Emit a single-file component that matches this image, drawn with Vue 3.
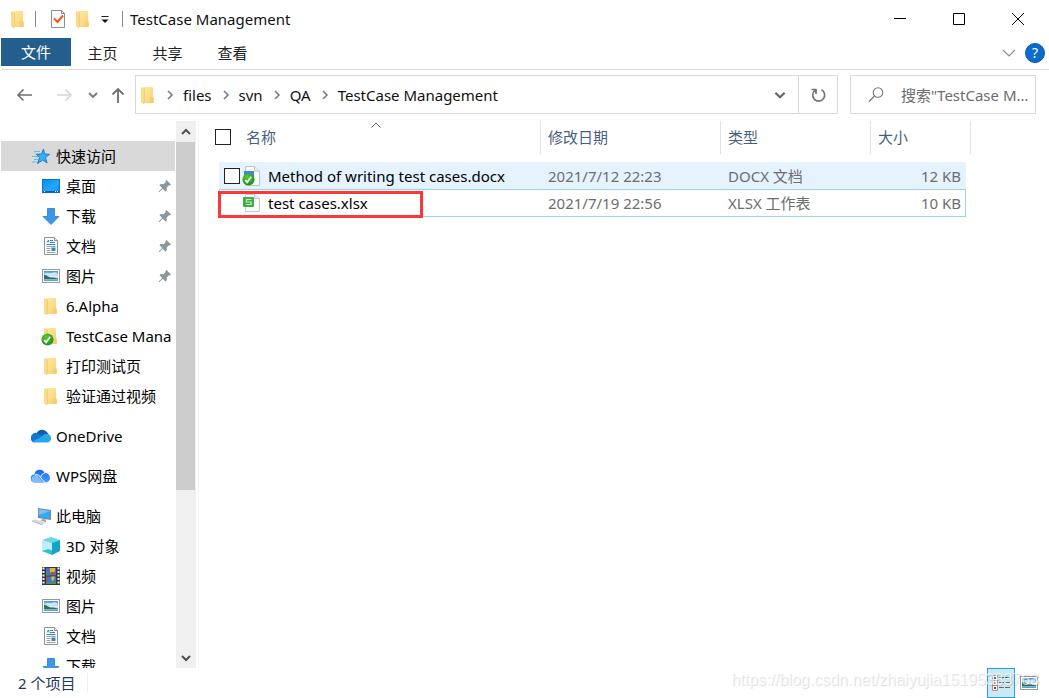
<script setup>
import { ref } from 'vue'

const tabs = ['主页', '共享', '查看']
const crumbs = ['files', 'svn', 'QA', 'TestCase Management']

const groups = [
  {
    label: '快速访问', icon: 'star', selected: true,
    items: [
      { label: '桌面', icon: 'desktop', pinned: true },
      { label: '下载', icon: 'download', pinned: true },
      { label: '文档', icon: 'document', pinned: true },
      { label: '图片', icon: 'picture', pinned: true },
      { label: '6.Alpha', icon: 'folder' },
      { label: 'TestCase Mana', icon: 'synced' },
      { label: '打印测试页', icon: 'folder' },
      { label: '验证通过视频', icon: 'folder' },
    ],
  },
  { label: 'OneDrive', icon: 'onedrive', items: [] },
  { label: 'WPS网盘', icon: 'wps', items: [] },
  {
    label: '此电脑', icon: 'pc',
    items: [
      { label: '3D 对象', icon: 'cube' },
      { label: '视频', icon: 'video' },
      { label: '图片', icon: 'picture' },
      { label: '文档', icon: 'document' },
      { label: '下载', icon: 'download' },
    ],
  },
]

const files = [
  { name: 'Method of writing test cases.docx', icon: 'docx', date: '2021/7/12 22:23', type: 'DOCX 文档', size: '12 KB', state: 'hover' },
  { name: 'test cases.xlsx', icon: 'xlsx', date: '2021/7/19 22:56', type: 'XLSX 工作表', size: '10 KB', state: 'focused', marked: true },
]

const search = ref('')
const allChecked = ref(false)
const rowChecked = ref(false)
</script>

<template>
  <div class="window">
    <svg class="defs" aria-hidden="true">
      <defs>
        <linearGradient id="gFolder" x1="0" x2="1" y1="0" y2="1">
          <stop offset="0" stop-color="#ffe9a6" /><stop offset="1" stop-color="#f7d070" />
        </linearGradient>
        <linearGradient id="gScreen" x1="0" x2="1" y1="0" y2="1">
          <stop offset="0" stop-color="#0a8cf0" /><stop offset="0.6" stop-color="#22a7ff" /><stop offset="1" stop-color="#1590f0" />
        </linearGradient>
        <linearGradient id="gSky" x1="0" x2="0" y1="0" y2="1">
          <stop offset="0" stop-color="#3f8fd8" /><stop offset="0.55" stop-color="#dff1fb" /><stop offset="1" stop-color="#4a9ac4" />
        </linearGradient>
        <radialGradient id="gOk" cx="0.4" cy="0.3" r="0.8">
          <stop offset="0" stop-color="#5cc832" /><stop offset="1" stop-color="#148a14" />
        </radialGradient>
        <linearGradient id="gWps" x1="0" x2="0" y1="0" y2="1">
          <stop offset="0" stop-color="#1464f0" /><stop offset="1" stop-color="#4aa0ff" />
        </linearGradient>
      </defs>
      <symbol id="folder" viewBox="0 0 20 20">
        <path d="M5 2h9.500l.5.500V12l1 1v4.500l-.5.500H5z" fill="url(#gFolder)" />
        <path d="M12 13.500l1.500-1.500H15v6h-3z" fill="#f3c862" opacity=".5" />
        <path d="M3 2l3.500 1.500V17L5.500 19 3 17.500z" fill="#f9dc86" />
        <path d="M6.500 3.500V17L5.500 19" fill="none" stroke="#e8c469" stroke-width=".6" />
      </symbol>
      <symbol id="ok" viewBox="0 0 14 14">
        <circle cx="7" cy="7" r="6.500" fill="url(#gOk)" />
        <path d="M3.500 7.500l2 2.500L10 4" fill="none" stroke="#fff" stroke-width="1.800" />
      </symbol>
      <symbol id="synced" viewBox="0 0 20 20">
        <use href="#folder" width="20" height="20" />
        <use href="#ok" x="0" y="7" width="13" height="13" />
      </symbol>
      <symbol id="star" viewBox="0 0 20 20">
        <path d="M3 5.500h6M4 8h5M1 10.500h6M3 13.500h4M1 16h5" stroke="#70b8ea" stroke-width="1" />
        <path d="M12.500 3l1 5 5 .3-4 3.200 1.600 5.500-4.500-3-5 3.500 2-6L5.500 8.500l5-.5z" fill="#34b0fa" stroke="#1a7cc8" stroke-width="1" />
      </symbol>
      <symbol id="desktop" viewBox="0 0 20 20">
        <rect x="1.500" y="3.500" width="17" height="13" fill="url(#gScreen)" stroke="#0b72c8" />
        <path d="M2 15h16v1.500H2z" fill="#0a5ea8" />
        <path d="M3 15.500h1M14 15.500h1M16 15.500h1" stroke="#fff" />
      </symbol>
      <symbol id="download" viewBox="0 0 20 20">
        <path d="M6.500 2.500h7v8h4.500L10 18.500 2 10.500h4.500z" fill="#3b97e8" stroke="#2a7ccb" stroke-width=".8" />
      </symbol>
      <symbol id="document" viewBox="0 0 20 20">
        <path d="M3.500 1.500h10l3 3v14h-13z" fill="#fff" stroke="#8b9297" />
        <path d="M13.500 1.500v3h3" fill="#e6e9eb" stroke="#8b9297" />
        <path d="M6 6.500L7.500 4 8 6.500M9 4.500h3M9 6.500h5M5.500 8.500h9" fill="none" stroke="#2c86d0" />
        <path d="M5.500 10.500h9M5.500 12.500h4M5.500 14.500h4M5.500 16.500h9" stroke="#9aa3aa" />
        <rect x="10.500" y="11.500" width="4" height="3.500" fill="#3d84c0" />
      </symbol>
      <symbol id="picture" viewBox="0 0 20 20">
        <rect x="1.500" y="3.500" width="17" height="13" fill="#fff" stroke="#93999e" />
        <rect x="3" y="5" width="14" height="10" fill="url(#gSky)" />
        <path d="M3 9c3 0 4 2 7 2.500 3 0 5 .5 7 1V13H3z" fill="#33705c" />
        <path d="M4 7.500c3-1.500 5 .5 7-.5s3-1 5 0v1.500c-4 .5-8 .5-12 0z" fill="#fff" opacity=".65" />
      </symbol>
      <symbol id="onedrive" viewBox="0 0 22 20">
        <path d="M6.500 8a6 6 0 0 1 10.800-1.500L19 9l-8 4z" fill="#0f5cb4" />
        <path d="M1 12.500A4.800 4.800 0 0 1 8 7.500l6 3.500-10 5.500A4 4 0 0 1 1 12.500z" fill="#0f78d4" />
        <path d="M12 10.500a5 5 0 0 1 4.500-2.700A4.500 4.500 0 0 1 21 12.300a4 4 0 0 1-4 4.200H5c-1 0-2-.5-2.500-1z" fill="#2aa6ee" />
      </symbol>
      <symbol id="wps" viewBox="0 0 22 20">
        <path d="M4.500 8.500a5.200 5.200 0 0 1 10-1.500 5 5 0 0 1 5.500 5 4.300 4.300 0 0 1-4.500 4.500H5a4 4 0 0 1-.5-8z" fill="url(#gWps)" />
        <path d="M1.500 13a4 4 0 0 1 7-2.500l5 6H5A3.500 3.500 0 0 1 1.500 13z" fill="#7fbcff" />
        <path d="M5 8.800c3-.8 4.500 1 6 3s2.500 4 4.500 4.600M10.500 11.300c1-2.500 2.500-3.800 4.300-4.200" fill="none" stroke="#fff" stroke-width="1" />
      </symbol>
      <symbol id="pc" viewBox="0 0 22 20">
        <path d="M8 2l13 2v10L8 12z" fill="#7c878f" />
        <path d="M9 3.200l11 1.700v7.900L9 11z" fill="#35a8f4" />
        <path d="M9 3.200l11 1.700L9 9z" fill="#72c6fa" />
        <path d="M12 13l4 .5v2.500l-5-1z" fill="#9ba5ac" />
        <path d="M2 14.500l4-1 10 3.500-3.500 1.500z" fill="#d3d9de" />
        <path d="M2 14.500v1L12.500 19.500V18.500z" fill="#a9b2b9" />
      </symbol>
      <symbol id="cube" viewBox="0 0 20 20">
        <path d="M10 1l9 3-8 3.500L1 4z" fill="#6bd6e8" />
        <path d="M1 4l10 3.500V19l-10-4z" fill="#bfeef4" />
        <path d="M11 7l8-3v11l-8 4z" fill="#12a4c4" />
        <path d="M1 15l6-2 4 1.500V19z" fill="#33bcd2" />
      </symbol>
      <symbol id="video" viewBox="0 0 20 20">
        <path d="M1 1h18v18H1z" fill="#34383b" />
        <path d="M2.500 1.500v17M17.500 1.500v17" stroke="#eceff0" stroke-width="2" stroke-dasharray="2 1.500" />
        <path d="M5 2h10v7.500H5zM5 10.500h10V18H5z" fill="#3a78cc" />
        <path d="M9 2h5v3l-2 2H9z" fill="#e3b62c" /><path d="M10 6h4v1l-2 2-3-1z" fill="#d2432c" />
        <path d="M10 10.500h4l-1 3-2 2z" fill="#e3b62c" /><path d="M5 17c3-1 6 0 10-1v2H5zM5 7c2 0 2 1 3 2.500H5z" fill="#4e9650" />
        <path d="M5 12h2v3H5z" fill="#c84436" />
      </symbol>
      <symbol id="pin" viewBox="0 0 14 14">
        <path d="M8.500 1L13 5.500l-1.200 1-.8-.3-2.300 2.300.1 3L7.500 12.500 4.700 9.700 1.500 13 .9 13l0-.7 3.300-3.200L1.500 6.200l1-1.200 3 .2L7.800 2.900l-.5-.8z" fill="#8b979f" />
      </symbol>
      <symbol id="docx" viewBox="0 0 20 20">
        <path d="M3.500.5h9l5 4.500v14.500h-14z" fill="#fbfbfb" stroke="#bfc3c6" />
        <path d="M12.500.5v4.500h5" fill="#e9ebec" stroke="#bfc3c6" />
        <rect x="2" y="5" width="10" height="8" fill="#3c86e6" />
        <use href="#ok" x="0" y="7" width="13" height="13" />
      </symbol>
      <symbol id="xlsx" viewBox="0 0 20 20">
        <path d="M3.500 1.500h9l5 4v13h-14z" fill="#fbfbfb" stroke="#c6c9cb" />
        <path d="M12.500 1.500v4h5" fill="#e9ebec" stroke="#c6c9cb" />
        <rect x="1" y="4" width="11" height="10" rx="1" fill="#41ad46" />
        <path d="M9.500 6.500h-5v2.500h4.500v2.500h-5" fill="none" stroke="#c4efc5" stroke-width="1.200" />
      </symbol>
      <symbol id="down" viewBox="0 0 12 12"><path d="M2 4l4 4 4-4" fill="none" stroke="currentColor" stroke-width="1.800" /></symbol>
      <symbol id="right" viewBox="0 0 12 12"><path d="M4 2l4 4-4 4" fill="none" stroke="currentColor" stroke-width="1.500" /></symbol>
    </svg>

    <header class="titlebar">
      <svg class="i20"><use href="#folder" /></svg>
      <span class="bar first"></span>
      <button class="plain" aria-label="属性">
        <svg class="i20" viewBox="0 0 20 20">
          <path d="M3.500 1.500h10l3 3v14h-13z" fill="#fafafa" stroke="#8b8f92" />
          <path d="M13.500 1.500v3h3" fill="none" stroke="#8b8f92" />
          <path d="M6 9.500l3.500 3.500 5.500-6.500" fill="none" stroke="#f0591c" stroke-width="2" />
        </svg>
      </button>
      <button class="plain second" aria-label="新建文件夹"><svg class="i20"><use href="#folder" /></svg></button>
      <button class="plain more" aria-label="自定义快速访问工具栏">
        <svg width="10" height="10" viewBox="0 0 10 10"><path d="M1.500 2.500h7" stroke="#222" /><path d="M1.500 5.500h7L5 9z" fill="#111" /></svg>
      </button>
      <span class="bar"></span>
      <h1 class="title">TestCase Management</h1>
      <div class="controls">
        <button class="plain ctl" aria-label="最小化"><svg width="14" height="14" viewBox="0 0 14 14"><path d="M1 6.500h12" stroke="#000" /></svg></button>
        <button class="plain ctl" aria-label="最大化"><svg width="14" height="14" viewBox="0 0 14 14"><path d="M1.500 1.500h11v11h-11z" fill="none" stroke="#000" /></svg></button>
        <button class="plain ctl" aria-label="关闭"><svg width="14" height="14" viewBox="0 0 14 14"><path d="M1 1l12 12M13 1L1 13" stroke="#000" /></svg></button>
      </div>
    </header>

    <nav class="ribbon">
      <button class="tab file">文件</button>
      <button v-for="t in tabs" :key="t" class="tab">{{ t }}</button>
      <div class="ribbon-end">
        <button class="plain" aria-label="展开功能区"><svg width="14" height="14" viewBox="0 0 14 14"><path d="M1 4l6 6 6-6" fill="none" stroke="#8e8e8e" stroke-width="1.200" /></svg></button>
        <button class="help" aria-label="帮助">?</button>
      </div>
    </nav>

    <div class="address">
      <div class="arrows">
        <button class="plain" aria-label="后退"><svg width="18" height="16" viewBox="0 0 18 16"><path d="M16 8H2M7.500 2.500L2 8l5.500 5.500" fill="none" stroke="#6f6f6f" stroke-width="1.600" /></svg></button>
        <button class="plain forward" aria-label="前进"><svg width="18" height="16" viewBox="0 0 18 16"><path d="M2 8h14M10.500 2.500L16 8l-5.500 5.500" fill="none" stroke="#d6d6d6" stroke-width="1.600" /></svg></button>
        <button class="plain recent" aria-label="最近的位置"><svg class="i12"><use href="#down" /></svg></button>
        <button class="plain" aria-label="上移"><svg width="16" height="18" viewBox="0 0 16 18"><path d="M8 17V3M2.500 8.500L8 3l5.500 5.500" fill="none" stroke="#6f6f6f" stroke-width="1.800" /></svg></button>
      </div>
      <div class="pathbox">
        <svg class="i20"><use href="#folder" /></svg>
        <template v-for="c in crumbs" :key="c">
          <svg class="i12 sep"><use href="#right" /></svg>
          <button class="plain crumb">{{ c }}</button>
        </template>
        <button class="plain drop" aria-label="以前的位置"><svg width="14" height="14"><use href="#down" /></svg></button>
        <button class="plain refresh" aria-label="刷新">
          <svg width="18" height="18" viewBox="0 0 18 18"><path d="M12.500 3.800A6 6 0 1 1 6.500 4M2.500 3.500H7V8" fill="none" stroke="#777" stroke-width="1.700" /></svg>
        </button>
      </div>
      <label class="searchbox">
        <svg width="18" height="18" viewBox="0 0 18 18"><circle cx="11" cy="6.500" r="4.800" fill="none" stroke="#777" stroke-width="1.100" /><path d="M7.500 10L2 15.500" stroke="#777" stroke-width="1.200" /></svg>
        <input v-model="search" type="text" aria-label="搜索" placeholder="搜索&quot;TestCase Management&quot;">
      </label>
    </div>

    <main class="body">
      <aside class="tree">
        <section v-for="g in groups" :key="g.label" class="group">
          <button class="node root" :class="{ selected: g.selected }"><svg class="i22"><use :href="'#' + g.icon" /></svg><span>{{ g.label }}</span></button>
          <button v-for="n in g.items" :key="n.label" class="node">
            <svg class="i20"><use :href="'#' + n.icon" /></svg><span>{{ n.label }}</span>
            <svg v-if="n.pinned" class="pin"><use href="#pin" /></svg>
          </button>
        </section>
      </aside>
      <div class="scrollbar">
        <button class="plain arrow" aria-label="向上滚动"><svg width="12" height="12" viewBox="0 0 12 12"><path d="M2 8l4-4 4 4" fill="none" stroke="#505050" stroke-width="2" /></svg></button>
        <div class="track"><div class="thumb"></div></div>
        <button class="plain arrow" aria-label="向下滚动"><svg width="12" height="12" viewBox="0 0 12 12"><path d="M2 4l4 4 4-4" fill="none" stroke="#505050" stroke-width="2" /></svg></button>
      </div>

      <section class="files">
        <table>
          <colgroup><col class="c-lead"><col class="c-name"><col class="c-date"><col class="c-type"><col class="c-size"><col class="c-end"></colgroup>
          <thead>
            <tr>
              <th colspan="2"><div class="head all">
                <input v-model="allChecked" type="checkbox" aria-label="全选">名称
                <svg class="sort" viewBox="0 0 12 8"><path d="M1.500 6.500L6 2l4.500 4.500" fill="none" stroke="#666" /></svg>
              </div></th>
              <th><div class="head">修改日期</div></th>
              <th><div class="head">类型</div></th>
              <th colspan="2"><div class="head">大小</div></th>
            </tr>
          </thead>
          <tbody>
            <tr v-for="f in files" :key="f.name" :class="f.state">
              <td class="blank"></td>
              <td class="name"><div class="cell">
                <span class="slot"><input v-if="f.state === 'hover'" v-model="rowChecked" type="checkbox" :aria-label="f.name"></span>
                <svg class="i20"><use :href="'#' + f.icon" /></svg><span>{{ f.name }}</span>
                <span v-if="f.marked" class="mark"></span>
              </div></td>
              <td>{{ f.date }}</td>
              <td>{{ f.type }}</td>
              <td class="size">{{ f.size }}</td>
              <td class="blank"></td>
            </tr>
          </tbody>
        </table>
      </section>
    </main>

    <footer class="status">
      <span class="count">2 个项目</span>
      <div class="views">
        <button class="plain view on" aria-label="详细信息">
          <svg width="20" height="18" viewBox="0 0 20 18">
            <path d="M1.500 1.500h5v5h-5zM1.500 6.500h5v5h-5zM1.500 11.500h5v5h-5z" fill="#fff" stroke="#999" />
            <path d="M3 4h2" stroke="#3a70b0" stroke-width="2" /><path d="M3 9h2" stroke="#d8a43a" stroke-width="2" /><path d="M3 14h2" stroke="#b83020" stroke-width="2" />
            <path d="M8 3.500h5M14 3.500h5M8 8.500h5M14 8.500h5M8 13.500h5M14 13.500h5" stroke="#666" />
          </svg>
        </button>
        <button class="plain view" aria-label="大图标"><svg class="i20"><use href="#picture" /></svg></button>
      </div>
      <span class="watermark">https://blog.csdn.net/zhaiyujia15195383763</span>
    </footer>
  </div>
</template>

<style>
body { margin: 0; background: #fff; }
</style>

<style scoped>
.window {
  display: flex; flex-direction: column; height: 100vh; overflow: hidden; box-sizing: border-box; padding-left: 1px;
  background: #fff; color: #111;
  font: 15px/20px "Noto Sans", "Noto Sans CJK SC", sans-serif;
}
.window * { box-sizing: border-box; }
.defs { position: absolute; width: 0; height: 0; }
svg { display: block; flex: none; }
button, input { font: inherit; color: inherit; }
.plain { display: flex; align-items: center; justify-content: center; padding: 0; border: 0; background: none; }
.i12 { width: 12px; height: 12px; }
.i20 { width: 20px; height: 20px; }
.i22 { width: 22px; height: 20px; }

.titlebar { display: flex; align-items: center; height: 38px; flex: none; padding-left: 7px; }
.bar { width: 1px; height: 16px; background: #8a8a8a; }
.bar.first { margin: 0 12px 0 7px; }
.second { margin-left: 5px; }
.more { margin: 0 12px 0 7px; }
.title { margin: 0 0 0 7px; font-size: 15px; font-weight: 400; }
.controls { display: flex; margin-left: auto; padding-right: 2px; }
.ctl { width: 59px; height: 38px; }

.ribbon { display: flex; align-items: flex-start; height: 32px; flex: none; border-bottom: 1px solid #dadbdc; }
.tab { height: 30px; width: 65px; padding: 0 2px 0 0; border: 0; background: none; color: #222; }
.tab.file { width: 70px; height: 28px; padding: 0; background: #245e8c; color: #fff; }
.ribbon-end { display: flex; align-items: center; gap: 9px; height: 30px; margin-left: auto; padding-right: 4px; }
.help { width: 20px; height: 20px; padding: 0; border: 1px solid #0f56a8; border-radius: 50%; background: #0a6ccb; color: #fff; font-size: 14px; line-height: 16px; }

.address { display: flex; align-items: center; height: 51px; flex: none; padding: 0 13px 2px 15px; }
.arrows { display: flex; align-items: center; width: 119px; }
.forward { margin-left: 21px; }
.recent { margin: 0 11px 0 14px; color: #777; }
.pathbox { display: flex; align-items: center; flex: 1; min-width: 0; height: 39px; padding-left: 2px; border: 1px solid #d9d9d9; }
.sep { margin: 0 7px 0 6px; color: #777; }
.crumb { white-space: nowrap; }
.crumb + .sep { margin-left: 8px; }
.drop { width: 36px; margin-left: auto; color: #666; }
.refresh { width: 39px; align-self: stretch; border-left: 1px solid #d9d9d9; }
.searchbox { display: flex; align-items: center; width: 186px; height: 39px; margin-left: 12px; padding-left: 16px; border: 1px solid #d9d9d9; }
.searchbox input { flex: 1; min-width: 0; margin-left: 16px; padding: 0; border: 0; outline: 0; background: none; text-overflow: ellipsis; }
.searchbox input::placeholder { color: #6d6d6d; opacity: 1; }

.body { display: flex; flex: 1; min-height: 0; }
.tree { width: 174px; padding-top: 20px; overflow: hidden; }
.group + .group { margin-top: 10px; }
.node { display: flex; align-items: center; gap: 5px; width: 100%; height: 30px; padding: 0 0 0 40px; border: 0; background: none; color: #000; text-align: left; white-space: nowrap; overflow: hidden; }
.node.root { gap: 4px; padding-left: 29px; }
.node.selected { background: #d9d9d9; }
.pin { width: 14px; height: 14px; margin: 0 3px 0 auto; }
.scrollbar { display: flex; flex-direction: column; width: 20px; margin-left: 1px; background: #f0f0f0; }
.arrow { height: 21px; flex: none; }
.track { flex: 1; }
.thumb { width: 19px; height: 69%; background: #cdcdcd; }
.files { flex: 1; min-width: 0; margin-left: 2px; border-left: 1px solid #f5f5f5; overflow: hidden; }

table { table-layout: fixed; width: 772px; border-collapse: separate; border-spacing: 0; }
.c-lead { width: 20px; } .c-name { width: 322px; } .c-date { width: 180px; } .c-type { width: 150px; } .c-size { width: 95px; } .c-end { width: 5px; }
th { padding: 0 0 8px; font-weight: 400; color: #4a5f7e; text-align: left; }
.head { position: relative; display: flex; align-items: center; height: 33px; padding: 0 0 2px 7px; border-right: 1px solid #e3e3e3; }
.head.all { gap: 15px; padding-left: 16px; }
.sort { position: absolute; top: 0; left: 50%; width: 12px; height: 8px; }
input[type="checkbox"] { appearance: none; flex: none; width: 16px; height: 16px; margin: 0; border: 1px solid #222; background: #fff; }
td { height: 27px; padding: 0 0 0 7px; color: #6d6d6d; }
td.name { padding: 0; color: #000; }
td.blank { padding: 0; }
.cell { position: relative; display: flex; align-items: center; height: 26px; }
.slot { display: flex; width: 23px; padding-left: 5px; }
.cell .i20 { margin-right: 6px; }
td.size { padding: 0 5px 0 0; text-align: right; }
.hover td:not(.blank) { background: #e5f3ff; }
.focused td:not(.blank) { height: 28px; border-top: 1px solid #99d1ff; border-bottom: 1px solid #99d1ff; }
.focused td.name { border-left: 1px solid #99d1ff; }
.focused .slot { width: 22px; }
.focused td.size { border-right: 1px solid #99d1ff; padding-right: 4px; }
.mark { position: absolute; top: 1px; left: -2px; width: 205px; height: 27px; border: 3px solid #fb3838; }

.status { position: relative; display: flex; align-items: center; justify-content: space-between; height: 30px; flex: none; padding: 0 6px 0 17px; color: #1e395b; }
.count { padding-right: 12px; border-right: 1px solid #f0f0f0; }
.views { display: flex; }
.view { width: 28px; height: 30px; }
.view.on { border: 1px solid #26a0da; background: #cbe8f6; }
.watermark { position: absolute; right: 10px; top: 2px; color: rgba(255, 255, 255, .7); font: 16px/20px "Liberation Sans", sans-serif; text-shadow: 1px 1px 1px rgba(0, 0, 0, .15); pointer-events: none; }
</style>
